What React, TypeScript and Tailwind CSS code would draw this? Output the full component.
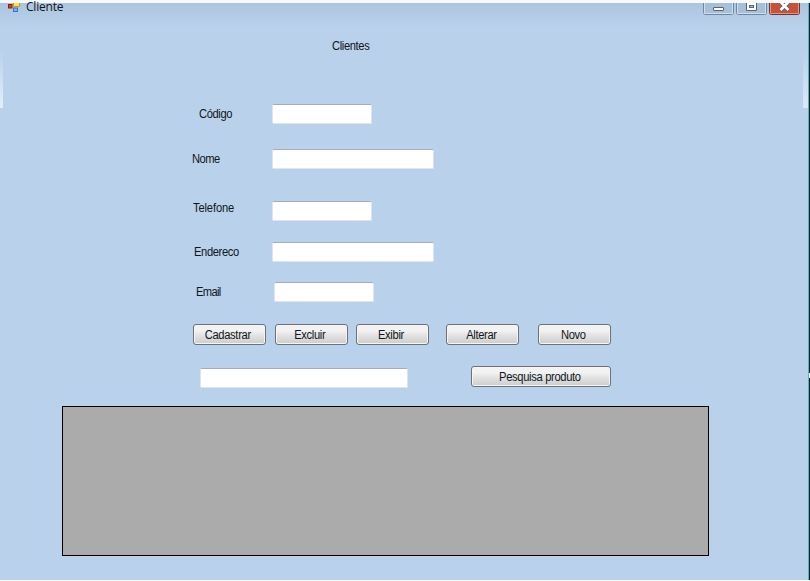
import React from "react";

function Txt({ children, className = "" }: { children: React.ReactNode; className?: string }) {
  return (
    <span
      className={`block w-max scale-x-[0.93] whitespace-nowrap text-[12px] leading-[14px] ${className}`}
    >
      {children}
    </span>
  );
}

function Field({
  label,
  row,
  pad,
  input,
  text = "tracking-[-0.4px]",
}: {
  label: string;
  row: string;
  pad: string;
  input: string;
  text?: string;
}) {
  return (
    <div className={`flex h-5 ${row}`}>
      <label className={`shrink-0 ${pad}`}>
        <Txt className={`origin-left ${text}`}>{label}</Txt>
      </label>
      <input
        aria-label={label}
        className={`h-5 rounded-[2px] border border-[#dce6f1] border-t-[#a5adb8] bg-white outline-none ${input}`}
      />
    </div>
  );
}

function Button({ children, className }: { children: string; className: string }) {
  return (
    <button
      className={`flex h-[21px] shrink-0 items-center justify-center rounded-[3px] border border-[#6c7177] bg-linear-to-b from-[#f2f2f2] from-30% via-[#e2e2e2] via-55% to-[#cdcdcd] pr-[3px] shadow-[inset_0_0_0_1px_#f5f5f5] ${className}`}
    >
      <Txt className="origin-center tracking-[-0.35px]">{children}</Txt>
    </button>
  );
}

function TitleBar() {
  return (
    <header className="flex h-3 justify-between pl-[7px] pr-[8px]">
      <div className="flex">
        <svg width="14" height="10" viewBox="0 0 14 10" className="mr-[5px]">
          <rect x="1.5" y="1.5" width="3.5" height="3.5" fill="#d73a20" stroke="#8c1e14" />
          <path d="M6.5 0V3.5H12.5V0" fill="#ffe04c" stroke="#c79719" />
          <rect x="6.5" y="5" width="4" height="3.5" fill="#6db7f5" stroke="#3476c4" />
        </svg>
        <span className="-mt-[2px] block h-3 text-[12px] leading-[12px] tracking-[-0.2px] [font-family:'Open_Sans','Noto_Sans',sans-serif]">
          Cliente
        </span>
      </div>
      <div className="flex gap-[2px]">
        <svg width="31" height="12" viewBox="0 0 31 12">
          <path d="M.5 0V9.5Q.5 11.5 2.5 11.5H28.5Q30.5 11.5 30.5 9.5V0" fill="#a7c0da" stroke="#6f87a1" />
          <path d="M1.5 0V10.5H29.5V0" fill="none" stroke="#cfdfee" />
          <rect x="10.5" y="4.5" width="10" height="3" rx="0.5" fill="#fff" stroke="#596473" />
        </svg>
        <svg width="31" height="12" viewBox="0 0 31 12">
          <path d="M.5 0V9.5Q.5 11.5 2.5 11.5H28.5Q30.5 11.5 30.5 9.5V0" fill="#a7c0da" stroke="#6f87a1" />
          <path d="M1.5 0V10.5H29.5V0" fill="none" stroke="#cfdfee" />
          <path d="M10.5 0V7.5H20.5V0" fill="#fff" stroke="#596473" />
          <rect x="13.5" y="2.5" width="4" height="2" fill="#a7c0da" stroke="#596473" />
        </svg>
        <svg width="31" height="12" viewBox="0 0 31 12">
          <path d="M.5 0V9.5Q.5 11.5 2.5 11.5H28.5Q30.5 11.5 30.5 9.5V0" fill="#c55239" stroke="#6b3438" />
          <path d="M1.5 0V10.5H29.5V0" fill="none" stroke="#dc9a88" />
          <path d="M11.5 -1L19.5 7M19.5 -1L11.5 7" stroke="#596473" strokeWidth="4.4" />
          <path d="M11.5 -1L19.5 7M19.5 -1L11.5 7" stroke="#fff" strokeWidth="2.6" />
        </svg>
      </div>
    </header>
  );
}

export default function App() {
  return (
    <div className="flex h-[581px] w-[810px] flex-col overflow-hidden bg-[#f7fafc] pt-[3px] pb-px text-[#101620] [font-family:'Liberation_Sans',Arial,sans-serif]">
      <div className="flex min-h-0 flex-1 bg-linear-to-b from-[#adc6e0] to-[#b9d1ea] to-[24px]">
        <div className="mt-[47px] h-[58px] w-[3px] shrink-0 bg-linear-to-b from-[#b9d1ea] to-[#e3eefa]" />
        <main className="-ml-[3px] flex w-[808px] shrink-0 flex-col">
          <TitleBar />
          <h1 className="mt-[24px] h-[14px] pl-[332px] leading-[14px]">
            <Txt className="origin-left tracking-[-0.4px]">Clientes</Txt>
          </h1>
          <Field label="Código" row="mt-[51px]" pad="w-[272px] pl-[199px] pt-[3px]" input="w-[100px]" />
          <Field label="Nome" row="mt-[25px]" pad="w-[272px] pl-[192px] pt-[3px]" input="w-[162px]" text="tracking-[-0.6px]" />
          <Field label="Telefone" row="mt-[32px]" pad="w-[272px] pl-[193px]" input="w-[100px]" text="tracking-[-0.15px]" />
          <Field label="Endereco" row="mt-[21px]" pad="w-[272px] pl-[194px] pt-[3px]" input="w-[162px]" />
          <Field label="Email" row="mt-[20px]" pad="w-[274px] pl-[196px] pt-[3px]" input="w-[100px]" text="tracking-[-0.7px]" />
          <div className="mt-[22px] flex pl-[193px]">
            <Button className="w-[73px]">Cadastrar</Button>
            <Button className="ml-[9px] w-[73px]">Excluir</Button>
            <Button className="ml-[8px] w-[73px]">Exibir</Button>
            <Button className="ml-[17px] w-[73px]">Alterar</Button>
            <Button className="ml-[19px] w-[73px]">Novo</Button>
          </div>
          <div className="mt-[21px] flex pl-[200px]">
            <input
              aria-label="Pesquisa"
              className="mt-[2px] h-5 w-[208px] rounded-[2px] border border-[#dce6f1] border-t-[#a5adb8] bg-white outline-none"
            />
            <Button className="ml-[63px] w-[140px]">Pesquisa produto</Button>
          </div>
          <div className="ml-[62px] mt-[18px] h-[150px] w-[647px] border border-black bg-[#ababab]" />
        </main>
        <div className="-ml-[5px] mt-[47px] h-[58px] w-[5px] shrink-0 bg-linear-to-b from-[#b9d1ea] to-[#dbe9f9]" />
        <div className="w-px shrink-0 bg-[#54b5c4]" />
        <div className="flex w-px shrink-0 flex-col bg-[#071c20] pt-[370px]">
          <div className="h-[5px] bg-white" />
        </div>
      </div>
    </div>
  );
}
